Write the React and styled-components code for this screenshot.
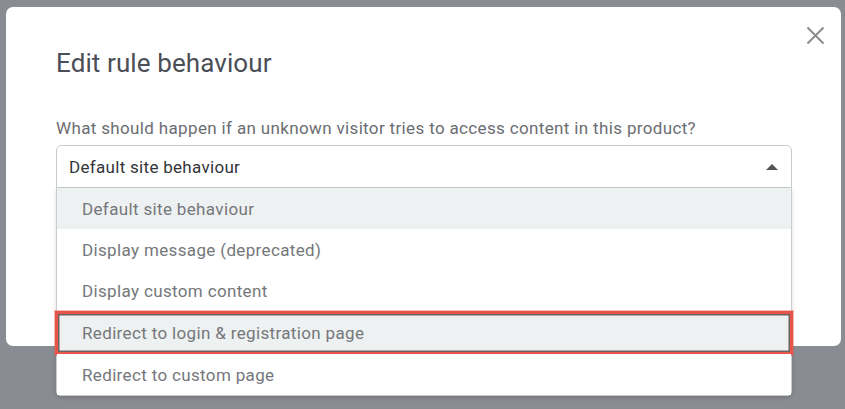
import React from "react";
import styled, { createGlobalStyle } from "styled-components";

const Global = createGlobalStyle`
  html, body { margin: 0; padding: 0; }
  body { background: #8b8d94; font-family: Roboto, "Open Sans", sans-serif; }
`;

const Page = styled.div`
  width: 845px;
  height: 409px;
  background: #8a8c93;
  padding: 7px 4px 0 6px;
  box-sizing: border-box;
  overflow: hidden;
  position: relative;
`;

const Modal = styled.div`
  position: relative;
  width: 835px;
  height: 339px;
  background: #fff;
  border-radius: 7px;
  padding: 40px 49px 0 50px;
  box-sizing: border-box;
`;

const Title = styled.h2`
  margin: 0;
  font-size: 26px;
  font-weight: 400;
  letter-spacing: 0.1px;
  color: #4b4e56;
  line-height: 32px;
`;

const Close = styled.button`
  position: absolute;
  top: 18px;
  right: 16px;
  width: 20px;
  height: 20px;
  padding: 0;
  border: 0;
  background: none;
  display: flex;
  align-items: center;
  justify-content: center;
`;

const Label = styled.div`
  margin-top: 38px;
  font-size: 17px;
  letter-spacing: 0.35px;
  color: #6b6d72;
  line-height: 22px;
`;

const SelectWrap = styled.div`
  position: relative;
  margin-top: 6px;
  z-index: 2;
`;

const SelectBox = styled.div`
  height: 43px;
  border: 1px solid #c9cbcd;
  border-radius: 5px 5px 0 0;
  box-sizing: border-box;
  display: flex;
  align-items: center;
  justify-content: space-between;
  padding: 0 13px 0 12px;
  font-size: 17px;
  letter-spacing: 0.3px;
  color: #333538;
  background: #fff;
`;

const Caret = styled.span`
  width: 0;
  height: 0;
  border-left: 6px solid transparent;
  border-right: 6px solid transparent;
  border-bottom: 6px solid #555;
  margin-top: 1px;
`;

const List = styled.ul`
  list-style: none;
  margin: 0;
  padding: 0;
  background: #fff;
  border: 1px solid #c9cbcd;
  border-top: 0;
  border-radius: 0 0 5px 5px;
  box-shadow: 0 2px 4px rgba(0,0,0,0.15);
`;

const Item = styled.li`
  position: relative;
  height: ${p => p.$h || 41}px;
  display: flex;
  align-items: center;
  padding-left: 25px;
  font-size: 17px;
  letter-spacing: 0.35px;
  color: #75777b;
  background: ${p => (p.$active || p.$marked ? "#eef1f1" : "#fff")};
  ${p => p.$marked && `
    border: 3px solid #e8554a;
    box-shadow: inset 0 0 0 1.5px #6a6261, 0 0 0 1px rgba(232,85,74,0.4);
    margin: -1px -2px;
    padding-left: 24px;
    height: ${(p.$h || 41) + 2}px;
    box-sizing: border-box;
  `}
`;

export default function App() {
  return (
    <>
      <Global />
      <Page>
        <Modal>
          <Title>Edit rule behaviour</Title>
          <Close aria-label="Close">
            <svg width="19" height="19" viewBox="0 0 19 19">
              <path d="M1.5 1.5 L17.5 17.5 M17.5 1.5 L1.5 17.5" stroke="#8a8b8e" strokeWidth="2" fill="none" />
            </svg>
          </Close>
          <Label>What should happen if an unknown visitor tries to access content in this product?</Label>
          <SelectWrap>
            <SelectBox>
              <span>Default site behaviour</span>
              <Caret />
            </SelectBox>
            <List>
              <Item $active>Default site behaviour</Item>
              <Item>Display message (deprecated)</Item>
              <Item $h={42}>Display custom content</Item>
              <Item $marked $h={42}>Redirect to login &amp; registration page</Item>
              <Item>Redirect to custom page</Item>
            </List>
          </SelectWrap>
        </Modal>
      </Page>
    </>
  );
}
